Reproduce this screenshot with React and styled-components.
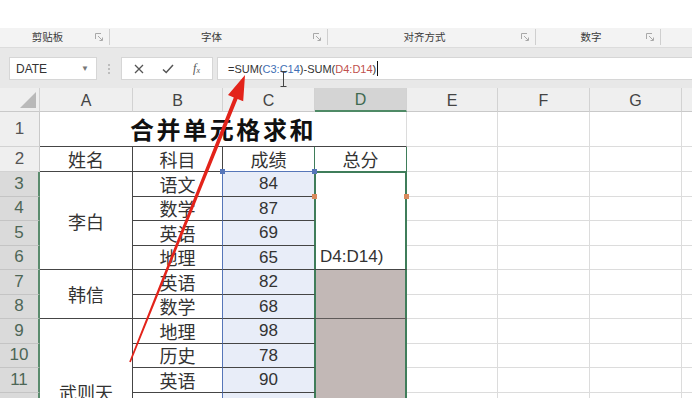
import React from 'react';
import styled, { createGlobalStyle } from 'styled-components';

const Global = createGlobalStyle`
  *, *::before, *::after { box-sizing: border-box; }
  html, body { margin: 0; padding: 0; height: 100%; overflow: hidden; background: #fff; }
  body { font-family: "Liberation Sans", "Noto Sans CJK SC", sans-serif; }
`;

const CJK = '"Noto Sans CJK SC", "Noto Sans", sans-serif';
const SANS = '"Liberation Sans", "Noto Sans CJK SC", sans-serif';

const Page = styled.div`
  position: relative;
  width: 692px;
  height: 398px;
  overflow: hidden;
  display: flex;
  flex-direction: column;
  background: #fff;
`;

const RibbonTop = styled.div`
  height: 28px;
  flex: none;
  background: #fff;
`;

const GroupBar = styled.div`
  height: 20px;
  flex: none;
  display: flex;
  background: #f3f3f3;
  border-bottom: 1px solid #dcdcdc;
`;

const Group = styled.div`
  width: ${p => (p.$w ? `${p.$w}px` : 'auto')};
  flex: ${p => (p.$w ? 'none' : '1')};
  display: flex;
  align-items: center;
  padding-right: 6px;
  border-right: ${p => (p.$w ? '1px solid #cfcfcf' : 'none')};
  margin: 1px 0 2px;
`;

const GroupLabel = styled.span`
  flex: 1;
  text-align: center;
  font-family: ${CJK};
  font-size: 10.5px;
  line-height: 1;
  color: #3a3a3a;
`;

const Launcher = () => (
  <svg width="8" height="8" viewBox="0 0 8 8" fill="none" stroke="#a8a8a8" strokeWidth="1">
    <path d="M0.5 6V0.5H6" />
    <path d="M3 3l4 4M7.5 4.5v3h-3" />
  </svg>
);

const FormulaArea = styled.div`
  height: 40px;
  flex: none;
  display: flex;
  align-items: flex-start;
  padding: 9px 0 0 9px;
  background: #e8e8e8;
`;

const NameBox = styled.div`
  width: 88px;
  height: 23px;
  flex: none;
  display: flex;
  align-items: center;
  justify-content: space-between;
  padding: 0 7px 0 6px;
  background: #fff;
  border: 1px solid #d6d6d6;
  font-family: ${SANS};
  font-size: 12px;
  color: #333;
`;

const Caret = styled.span`
  font-size: 8px;
  color: #777;
`;

const Dots = styled.div`
  width: 24px;
  height: 23px;
  flex: none;
  display: flex;
  flex-direction: column;
  align-items: center;
  justify-content: center;
  gap: 2px;
  & > i {
    width: 2px;
    height: 2px;
    background: #bdbdbd;
    display: block;
  }
`;

const FxBox = styled.div`
  width: 92px;
  height: 23px;
  flex: none;
  display: grid;
  grid-template-columns: repeat(3, 29px);
  padding-left: 2px;
  align-items: center;
  justify-items: center;
  background: #fff;
  border: 1px solid #d6d6d6;
  color: #666;
`;

const Fx = styled.span`
  font-family: "Liberation Serif", serif;
  font-style: italic;
  font-size: 12px;
  color: #555;
  & > sub {
    font-size: 8px;
    vertical-align: -1px;
  }
`;

const FormulaInput = styled.div`
  flex: 1;
  height: 23px;
  margin-left: 4px;
  position: relative;
  display: flex;
  align-items: center;
  padding-left: 10px;
  background: #fff;
  border: 1px solid #d6d6d6;
  border-right: none;
  font-family: ${SANS};
  font-size: 11px;
  color: #333;
  white-space: nowrap;
`;

const Ref = styled.span`
  color: ${p => p.$c};
`;

const TextCaret = styled.span`
  display: inline-block;
  width: 1px;
  height: 15px;
  margin-left: 1px;
  background: #111;
`;

const IBeam = styled.svg`
  position: absolute;
  left: 62px;
  top: 13px;
`;

const Sheet = styled.div`
  flex: none;
  display: grid;
  grid-template-columns: 40px 93px 90px 92px 92px 91px 92px 92px 92px;
  grid-template-rows: 24px 35px 25px repeat(12, 24.5px);
`;

const ColHead = styled.div`
  grid-row: 1;
  grid-column: ${p => p.$c};
  display: flex;
  align-items: center;
  justify-content: center;
  background: ${p => (p.$sel ? '#d4d4d4' : '#efefef')};
  border-right: 1px solid #d2d2d2;
  border-bottom: ${p => (p.$sel ? '2px solid #4f8a66' : '1px solid #c9c9c9')};
  font-family: ${SANS};
  font-size: 16px;
  color: ${p => (p.$sel ? '#3f6a50' : '#444')};
  padding-top: 2px;
`;

const Corner = styled.div`
  grid-row: 1;
  grid-column: 1;
  display: flex;
  align-items: flex-end;
  justify-content: flex-end;
  padding: 0 3px 3px 0;
  background: #efefef;
  border-right: 1px solid #d2d2d2;
  border-bottom: 1px solid #c9c9c9;
`;

const CornerTriangle = styled.div`
  width: 0;
  height: 0;
  border-left: 16px solid transparent;
  border-bottom: 16px solid #b9b9b9;
`;

const RowHead = styled.div`
  grid-row: ${p => p.$r};
  grid-column: 1;
  display: flex;
  align-items: center;
  justify-content: center;
  background: ${p => (p.$sel ? '#dadada' : '#efefef')};
  border-right: ${p => (p.$sel ? '2px solid #5a8b6d' : '1px solid #c9c9c9')};
  border-bottom: 1px solid ${p => (p.$sel ? '#c4c4c4' : '#d2d2d2')};
  font-family: ${SANS};
  font-size: 17px;
  color: ${p => (p.$sel ? '#4d6656' : '#555')};
`;

const Cell = styled.div`
  grid-row: ${p => p.$r} / span ${p => p.$rs || 1};
  grid-column: ${p => p.$c} / span ${p => p.$cs || 1};
  position: relative;
  display: flex;
  align-items: ${p => p.$va || 'center'};
  justify-content: ${p => p.$ha || 'center'};
  padding: ${p => p.$pad || '0'};
  background: ${p => p.$bg || '#fff'};
  border-right: 1px solid ${p => p.$br || '#dcdcdc'};
  border-bottom: 1px solid ${p => p.$bb || '#dcdcdc'};
  box-shadow: ${p => p.$sh || 'none'};
  font-family: ${p => (p.$num ? SANS : CJK)};
  font-size: ${p => (p.$title ? '24px' : p.$num ? '17px' : '18px')};
  font-weight: ${p => (p.$title ? 700 : 400)};
  letter-spacing: ${p => (p.$title ? '2.6px' : '0')};
  line-height: 1;
  color: ${p => (p.$title ? '#111' : '#333')};
  white-space: nowrap;
`;

const Handle = styled.span`
  position: absolute;
  width: 5px;
  height: 5px;
  top: ${p => p.$top}px;
  ${p => (p.$side === 'left' ? 'left: -3px;' : 'right: -3px;')}
  background: ${p => p.$c};
  z-index: 2;
`;

const Overlay = styled.svg`
  position: absolute;
  left: 0;
  top: 0;
  pointer-events: none;
`;

const DARK = '#454545';
const BLUE = '#5676b9';
const GREEN = '#3f7d5a';
const C_BG = '#e8edf8';
const D_FILL = '#c2b8b6';
const ORANGE = '#d98a5e';

const subjects = ['语文', '数学', '英语', '地理', '英语', '数学', '地理', '历史', '英语', '', '', ''];
const scores = ['84', '87', '69', '65', '82', '68', '98', '78', '90', '', '', ''];

export default function App() {
  const rows = Array.from({ length: 14 }, (_, i) => i + 1);
  const cols = ['A', 'B', 'C', 'D', 'E', 'F', 'G', ''];

  return (
    <Page>
      <Global />
      <RibbonTop />
      <GroupBar>
        <Group $w={110}><GroupLabel>剪贴板</GroupLabel><Launcher /></Group>
        <Group $w={218}><GroupLabel>字体</GroupLabel><Launcher /></Group>
        <Group $w={208}><GroupLabel>对齐方式</GroupLabel><Launcher /></Group>
        <Group $w={125}><GroupLabel>数字</GroupLabel><Launcher /></Group>
        <Group />
      </GroupBar>
      <FormulaArea>
        <NameBox>
          DATE
          <Caret>▼</Caret>
        </NameBox>
        <Dots><i /><i /><i /></Dots>
        <FxBox>
          <svg width="10" height="10" viewBox="0 0 10 10" stroke="#555" strokeWidth="1.3" fill="none">
            <path d="M1 1l8 8M9 1L1 9" />
          </svg>
          <svg width="12" height="10" viewBox="0 0 12 10" stroke="#555" strokeWidth="1.5" fill="none">
            <path d="M1 5.5l3.2 3L11 1" />
          </svg>
          <Fx>f<sub>x</sub></Fx>
        </FxBox>
        <FormulaInput>
          =SUM(<Ref $c="#3f6fb5">C3:C14</Ref>)-SUM(<Ref $c="#c0504d">D4:D14</Ref>)
          <TextCaret />
          <IBeam width="7" height="16" viewBox="0 0 7 16" fill="none" stroke="#444" strokeWidth="1">
            <path d="M0.5 0.5h6M3.5 0.5v15M0.5 15.5h6" />
          </IBeam>
        </FormulaInput>
      </FormulaArea>

      <Sheet>
        <Corner><CornerTriangle /></Corner>
        {cols.map((c, i) => (
          <ColHead key={`h${i}`} $c={i + 2} $sel={c === 'D'}>{c}</ColHead>
        ))}
        {rows.map(r => (
          <RowHead key={r} $r={r + 1} $sel={r >= 3}>{r <= 11 ? r : ''}</RowHead>
        ))}

        {/* Row 1: merged title */}
        <Cell $r={2} $c={2} $cs={4} $title $bb={DARK}>合并单元格求和</Cell>

        {/* Row 2: headers */}
        <Cell $r={3} $c={2} $br={DARK} $bb={DARK}>姓名</Cell>
        <Cell $r={3} $c={3} $br={DARK} $bb={DARK}>科目</Cell>
        <Cell $r={3} $c={4} $br={GREEN} $bb={BLUE}>成绩</Cell>
        <Cell $r={3} $c={5} $br={GREEN} $bb={GREEN}>总分</Cell>

        {/* Column A merged names */}
        <Cell $r={4} $rs={4} $c={2} $br={DARK} $bb={DARK}>李白</Cell>
        <Cell $r={8} $rs={2} $c={2} $br={DARK} $bb={DARK}>韩信</Cell>
        <Cell $r={10} $rs={6} $c={2} $br={DARK} $bb={DARK}>武则天</Cell>

        {/* Columns B and C */}
        {subjects.map((s, i) => (
          <Cell key={`b${i}`} $r={i + 4} $c={3} $br={BLUE} $bb={DARK}>{s}</Cell>
        ))}
        {scores.map((s, i) => (
          <Cell key={`c${i}`} $r={i + 4} $c={4} $num $bg={C_BG} $br={GREEN} $bb={DARK}>
            {i === 0 && <Handle $side="left" $top={-3} $c={BLUE} />}
            {i === 0 && <Handle $side="right" $top={-3} $c={BLUE} />}
            {s}
          </Cell>
        ))}

        {/* Column D merged */}
        <Cell
          $r={4}
          $rs={4}
          $c={5}
          $num
          $va="flex-end"
          $ha="flex-start"
          $pad="0 0 4px 5px"
          $br={GREEN}
          $bb={DARK}
          $sh={`inset 1px 0 0 ${GREEN}, inset -1px 0 0 ${GREEN}, inset 0 1px 0 ${GREEN}`}
        >
          <Handle $side="left" $top={22} $c={ORANGE} />
          <Handle $side="right" $top={22} $c={ORANGE} />
          D4:D14)
        </Cell>
        <Cell $r={8} $rs={2} $c={5} $bg={D_FILL} $br={GREEN} $bb="#5f5a59"
          $sh={`inset 1px 0 0 ${GREEN}, inset -1px 0 0 ${GREEN}`} />
        <Cell $r={10} $rs={6} $c={5} $bg={D_FILL} $br={GREEN} $bb={DARK}
          $sh={`inset 1px 0 0 ${GREEN}, inset -1px 0 0 ${GREEN}`} />

        {/* Empty columns E–H */}
        {rows.map(r =>
          [6, 7, 8, 9].map(c => <Cell key={`e${r}-${c}`} $r={r + 1} $c={c} />)
        )}
      </Sheet>

      <Overlay width="692" height="398" viewBox="0 0 692 398">
        <polygon
          fill="#e3231a"
          points="245,75 228,95 233.8,97.4 129.2,361.7 130.8,362.3 237.6,99 243.2,101.2"
        />
      </Overlay>
    </Page>
  );
}
